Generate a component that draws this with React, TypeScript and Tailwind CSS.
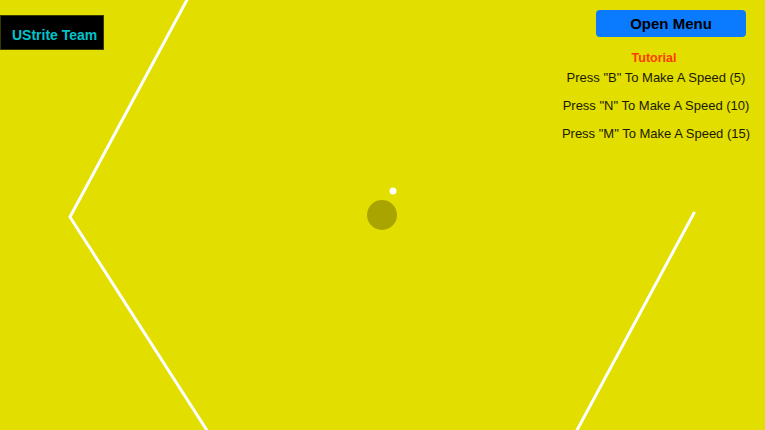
export default function App() {
  const tutorial = [
    'Press "B" To Make A Speed (5)',
    'Press "N" To Make A Speed (10)',
    'Press "M" To Make A Speed (15)',
  ]

  return (
    <div className="relative w-[765px] h-[430px] overflow-hidden bg-[#e1de00] font-['Liberation_Sans',Arial,sans-serif]">
      {/* game canvas */}
      <svg className="absolute inset-0" width="765" height="430" viewBox="0 0 765 430">
        <polyline
          points="188,-2 70,217 208,432"
          fill="none"
          stroke="#ffffff"
          strokeWidth="3"
          strokeLinejoin="miter"
        />
        <line x1="694" y1="213" x2="576" y2="432" stroke="#ffffff" strokeWidth="3" strokeLinecap="round" />
        <circle cx="382" cy="215" r="15" fill="#a9a400" />
        <circle cx="393" cy="191" r="3.5" fill="#ffffff" />
      </svg>

      {/* hud */}
      <div className="relative flex justify-between">
        <div className="pt-[15px]">
          <div className="w-[104px] h-[35px] bg-black border border-[#3a3a00] flex items-center pl-[11px] pt-[5px]">
            <span className="text-[14px] font-bold text-[#00c3cc]">UStrite Team</span>
          </div>
        </div>

        <div className="flex flex-col items-end pt-[10px] pr-[9px]">
          <button className="mr-[10px] w-[150px] h-[27px] rounded-[4px] bg-[#0a7bff] text-[15px] font-bold text-black flex items-center justify-center pt-[1px]">
            Open Menu
          </button>
          <div className="w-[200px] mt-[16px] text-center">
            <div className="text-[12.5px] leading-[10px] font-bold text-[#ff3a00] pr-[4px]">Tutorial</div>
            <div className="pt-[1px]">
              {tutorial.map((t) => (
                <div key={t} className="text-[13px] leading-[28px] text-[#1a1a00]">
                  {t}
                </div>
              ))}
            </div>
          </div>
        </div>
      </div>
    </div>
  )
}
